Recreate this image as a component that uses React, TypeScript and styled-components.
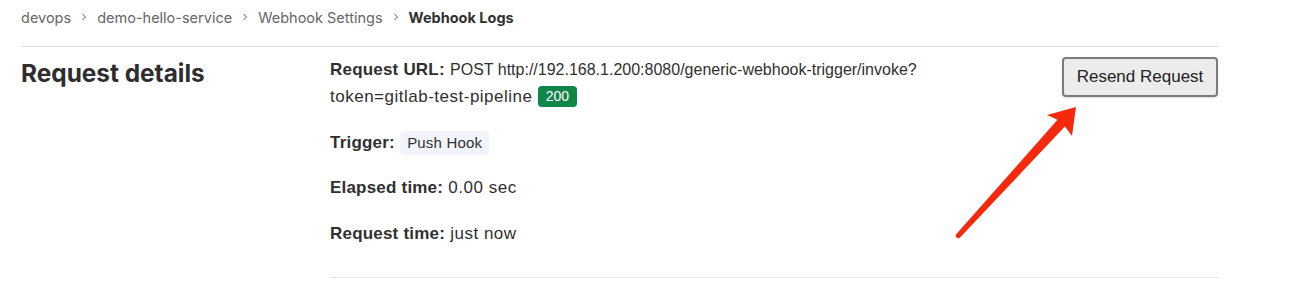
import React from 'react'
import styled, { createGlobalStyle } from 'styled-components'

const GlobalStyle = createGlobalStyle`
  html, body {
    margin: 0;
    padding: 0;
    background: #fff;
  }
  body {
    font-family: Inter, "Liberation Sans", Arial, sans-serif;
    color: #303030;
  }
`

const Page = styled.div`
  position: relative;
  width: 1198px;
  padding-left: 21px;
`

const Breadcrumbs = styled.nav`
  display: flex;
  align-items: center;
  height: 34px;
  padding-bottom: 12px;
  border-bottom: 1px solid #dbdbdb;
  font-size: 14.5px;
`

const Crumb = styled.span<{ $current?: boolean }>`
  color: ${(p) => (p.$current ? '#303030' : '#666')};
  font-weight: ${(p) => (p.$current ? 700 : 400)};
`

const Chevron = styled.span`
  display: inline-flex;
  margin: 0 10px;
  color: #999;
`

const Row = styled.section`
  display: grid;
  grid-template-columns: 309px 1fr;
`

const Heading = styled.h4`
  margin: 10px 0 0;
  font-size: 24.4px;
  line-height: 32px;
  font-weight: 700;
  color: #2e2e2e;
`

const Details = styled.div`
  display: flex;
  align-items: flex-start;
  padding-top: 9px;
  padding-bottom: 12px;
  border-bottom: 1px solid #e5e5e5;
  font-family: "Liberation Sans", Arial, sans-serif;
`

const Fields = styled.div`
  flex: 1;
  padding-right: 90px;
`

const Field = styled.p`
  margin: 0 0 18.5px;
  font-size: 17px;
  line-height: 27px;
  letter-spacing: 0.5px;
`

const Label = styled.strong`
  font-weight: 700;
  letter-spacing: 0.2px;
`

const Endpoint = styled.span`
  font-size: 16px;
  letter-spacing: 0;
`

const StatusBadge = styled.span`
  display: inline-block;
  padding: 0 8px;
  border-radius: 4px;
  background: #108548;
  color: #fff;
  font-size: 14px;
  line-height: 21px;
  letter-spacing: 0;
  vertical-align: 1px;
`

const Tag = styled.span`
  display: inline-block;
  padding: 0 7px;
  border-radius: 4px;
  background: #f1f4fa;
  font-size: 15px;
  line-height: 24px;
  letter-spacing: 0.2px;
`

const ResendButton = styled.button`
  margin-top: 1px;
  margin-right: 1px;
  width: 156px;
  height: 40px;
  border: 2px solid #7c7c7c;
  border-radius: 4px;
  background: #ececec;
  color: #222;
  font-family: "Liberation Sans", Arial, sans-serif;
  font-size: 17px;
  box-shadow: 0 1px 2px rgba(0, 0, 0, 0.15);
`

const Arrow = styled.svg`
  position: absolute;
  left: 0;
  top: 0;
  pointer-events: none;
`

function ChevronIcon() {
  return (
    <Chevron>
      <svg width="6" height="8" viewBox="0 0 6 8">
        <path d="M1.5 1 L4.5 4 L1.5 7" fill="none" stroke="currentColor" strokeWidth="1.2" />
      </svg>
    </Chevron>
  )
}

export default function App() {
  return (
    <>
      <GlobalStyle />
      <Page>
        <Breadcrumbs>
          <Crumb>devops</Crumb>
          <ChevronIcon />
          <Crumb>demo-hello-service</Crumb>
          <ChevronIcon />
          <Crumb>Webhook Settings</Crumb>
          <ChevronIcon />
          <Crumb $current>Webhook Logs</Crumb>
        </Breadcrumbs>
        <Row>
          <Heading>Request details</Heading>
          <Details>
            <Fields>
              <Field>
                <Label>Request URL:</Label>{' '}
                <Endpoint>POST http://192.168.1.200:8080/generic-webhook-trigger/invoke?</Endpoint>
                <wbr />
                token=gitlab-test-pipeline <StatusBadge>200</StatusBadge>
              </Field>
              <Field>
                <Label>Trigger:</Label> <Tag>Push Hook</Tag>
              </Field>
              <Field>
                <Label>Elapsed time:</Label> 0.00 sec
              </Field>
              <Field>
                <Label>Request time:</Label> just now
              </Field>
            </Fields>
            <ResendButton>Resend Request</ResendButton>
          </Details>
        </Row>
      </Page>
      <Arrow width="1292" height="288" viewBox="0 0 1292 288">
        <path
          d="M956.2 234.3 L1057.5 119.8 L1047 115 L1076 107 L1072 136 L1064.9 126.6 L959.8 237.7 A2.5 2.5 0 0 1 956.2 234.3 Z"
          fill="#f52a0c"
        />
      </Arrow>
    </>
  )
}
